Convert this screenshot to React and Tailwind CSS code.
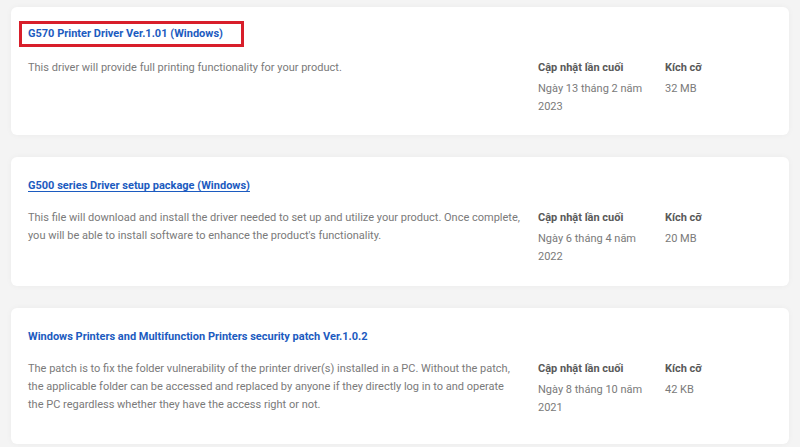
import React from "react";

const DRIVERS = [
  {
    title: "G570 Printer Driver Ver.1.01 (Windows)",
    desc: "This driver will provide full printing functionality for your product.",
    date: "Ngày 13 tháng 2 năm 2023",
    size: "32 MB",
    boxed: true,
    height: "h-[128px]",
  },
  {
    title: "G500 series Driver setup package (Windows)",
    desc: "This file will download and install the driver needed to set up and utilize your product. Once complete, you will be able to install software to enhance the product's functionality.",
    date: "Ngày 6 tháng 4 năm 2022",
    size: "20 MB",
    underline: true,
    height: "h-[129px]",
  },
  {
    title: "Windows Printers and Multifunction Printers security patch Ver.1.0.2",
    desc: "The patch is to fix the folder vulnerability of the printer driver(s) installed in a PC. Without the patch, the applicable folder can be accessed and replaced by anyone if they directly log in to and operate the PC regardless whether they have the access right or not.",
    date: "Ngày 8 tháng 10 năm 2021",
    size: "42 KB",
    height: "h-[136px]",
  },
];

const DriverCard = ({ item }) => (
  <div className={`bg-white rounded-md shadow-[0_0_6px_rgba(0,0,0,0.04)] pl-[17px] pr-4 pt-[21px] ${item.height}`}>
    {/* Title */}
    <div className="h-4 flex items-center">
      <a
        href="#"
        className={`text-[11px] font-bold leading-4 text-[#1c5bc0] ${item.underline ? "underline underline-offset-2" : ""} ${item.boxed ? "relative -top-[2px]" : ""}`}
      >
        {item.title}
        {item.boxed && (
          <span className="absolute -left-[9px] -top-[5px] w-[225px] h-[26px] border-[3px] border-[#d81e2a]"></span>
        )}
      </a>
    </div>
    {/* Body */}
    <div className="flex mt-[15px]">
      <p className="w-[493px] text-[11px] leading-[18px] text-[#7a7a7a]">{item.desc}</p>
      <div className="w-[127px] ml-[17px]">
        <div className="text-[11px] leading-[18px] font-bold text-[#595959]">Cập nhật lần cuối</div>
        <div className="text-[11px] leading-[18px] text-[#7a7a7a] mt-[3px] w-[115px]">{item.date}</div>
      </div>
      <div>
        <div className="text-[11px] leading-[18px] font-bold text-[#595959]">Kích cỡ</div>
        <div className="text-[11px] leading-[18px] text-[#7a7a7a] mt-[3px]">{item.size}</div>
      </div>
    </div>
  </div>
);

const App = () => {
  return (
    <div className="min-h-screen bg-[#f4f4f4] px-[11px] pt-[7px] flex flex-col gap-[22px]" style={{ fontFamily: "Roboto, 'Noto Sans', sans-serif" }}>
      {DRIVERS.map((d) => (
        <DriverCard key={d.title} item={d} />
      ))}
    </div>
  );
};

export default App;
